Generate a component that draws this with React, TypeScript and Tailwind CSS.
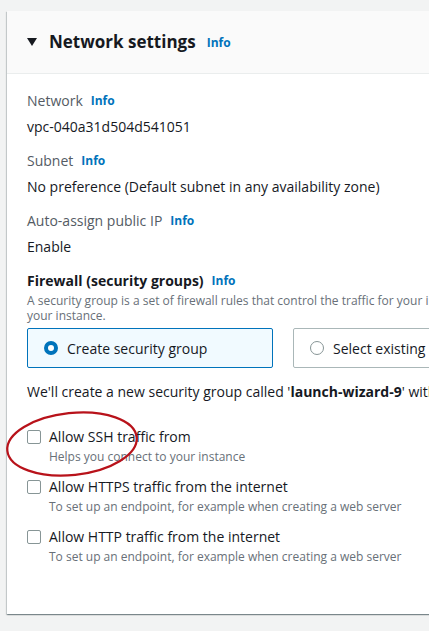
import React from "react";

function Info() {
  return <span className="ml-2 text-[12px] font-bold text-[#0073bb]">Info</span>;
}

function Field({ label, value }: { label: string; value: string }) {
  return (
    <div>
      <div className="flex items-center text-[14px] leading-[20px] text-[#545b64]">
        {label}
        <Info />
      </div>
      <div className="mt-[6px] text-[14px] leading-[20px] text-[#16191f]">{value}</div>
    </div>
  );
}

function Check({ label, hint }: { label: string; hint: string }) {
  return (
    <div className="flex items-start gap-[8px]">
      <span className="mt-[3px] h-[14px] w-[14px] shrink-0 rounded-[2px] border border-[#879596] bg-white" />
      <div>
        <div className="text-[14px] leading-[20px] text-[#16191f]">{label}</div>
        <div className="text-[12px] leading-[20px] text-[#687078]">{hint}</div>
      </div>
    </div>
  );
}

export default function App() {
  return (
    <div
      className="h-[631px] w-[429px] overflow-hidden bg-[#f2f3f3] pt-[11px] pl-[7px]"
      style={{ fontFamily: '"Open Sans", "Noto Sans", sans-serif' }}
    >
      <div className="relative w-[560px] bg-white shadow-[0_1px_1px_0_rgba(0,28,36,0.3),1px_1px_1px_0_rgba(0,28,36,0.15),-1px_1px_1px_0_rgba(0,28,36,0.15)]">
        <div className="flex h-[63px] items-center border-b border-[#eaeded] bg-[#fafafa] pl-[20px]">
          <svg width="10" height="8" viewBox="0 0 10 8" className="mr-[12px]">
            <path d="M0 0 H10 L5 8 Z" fill="#16191f" />
          </svg>
          <span className="text-[17px] font-bold text-[#16191f]">Network settings</span>
          <span className="ml-[11px] mt-[2px] text-[12px] font-bold text-[#0073bb]">Info</span>
        </div>

        <div className="px-[20px] pt-[17px] pb-[47px]">
          <div className="flex flex-col gap-[14px]">
            <Field label="Network" value="vpc-040a31d504d541051" />
            <Field label="Subnet" value="No preference (Default subnet in any availability zone)" />
            <Field label="Auto-assign public IP" value="Enable" />
          </div>

          <div className="mt-[14px]">
            <div className="flex items-center text-[14px] font-bold leading-[20px] text-[#16191f]">
              Firewall (security groups)
              <Info />
            </div>
            <div className="mt-[2px] whitespace-nowrap text-[12px] leading-[15px] text-[#687078]">
              A security group is a set of firewall rules that control the traffic for your instance. Add rules
              <br />
              your instance.
            </div>
            <div className="mt-[5px] flex gap-[20px]">
              <div className="flex h-[40px] w-[246px] shrink-0 items-center rounded-[2px] border border-[#0073bb] bg-[#f1faff] pl-[16px]">
                <span className="h-[14px] w-[14px] rounded-full border-[4px] border-[#0073bb] bg-white" />
                <span className="ml-[9px] text-[14px] text-[#16191f]">Create security group</span>
              </div>
              <div className="flex h-[40px] w-[246px] shrink-0 items-center rounded-[2px] border border-[#aab7b8] bg-white pl-[16px]">
                <span className="h-[14px] w-[14px] rounded-full border-[1.5px] border-[#879596] bg-white" />
                <span className="ml-[9px] whitespace-nowrap text-[14px] text-[#16191f]">Select existing security group</span>
              </div>
            </div>
          </div>

          <div className="mt-[14px] whitespace-nowrap text-[14px] leading-[20px] text-[#16191f]">
            We'll create a new security group called '<b>launch-wizard-9</b>' with the following rules:
          </div>

          <div className="mt-[25px] flex flex-col gap-[10px]">
            <Check label="Allow SSH traffic from" hint="Helps you connect to your instance" />
            <Check label="Allow HTTPS traffic from the internet" hint="To set up an endpoint, for example when creating a web server" />
            <Check label="Allow HTTP traffic from the internet" hint="To set up an endpoint, for example when creating a web server" />
          </div>
        </div>

        <svg className="pointer-events-none absolute left-[-5px] top-[395px]" width="150" height="80" viewBox="0 0 150 80">
          <ellipse cx="70" cy="38" rx="65" ry="31" transform="rotate(-6 70 38)" fill="none" stroke="#b8121a" strokeWidth="2.2" />
        </svg>
      </div>
    </div>
  );
}
